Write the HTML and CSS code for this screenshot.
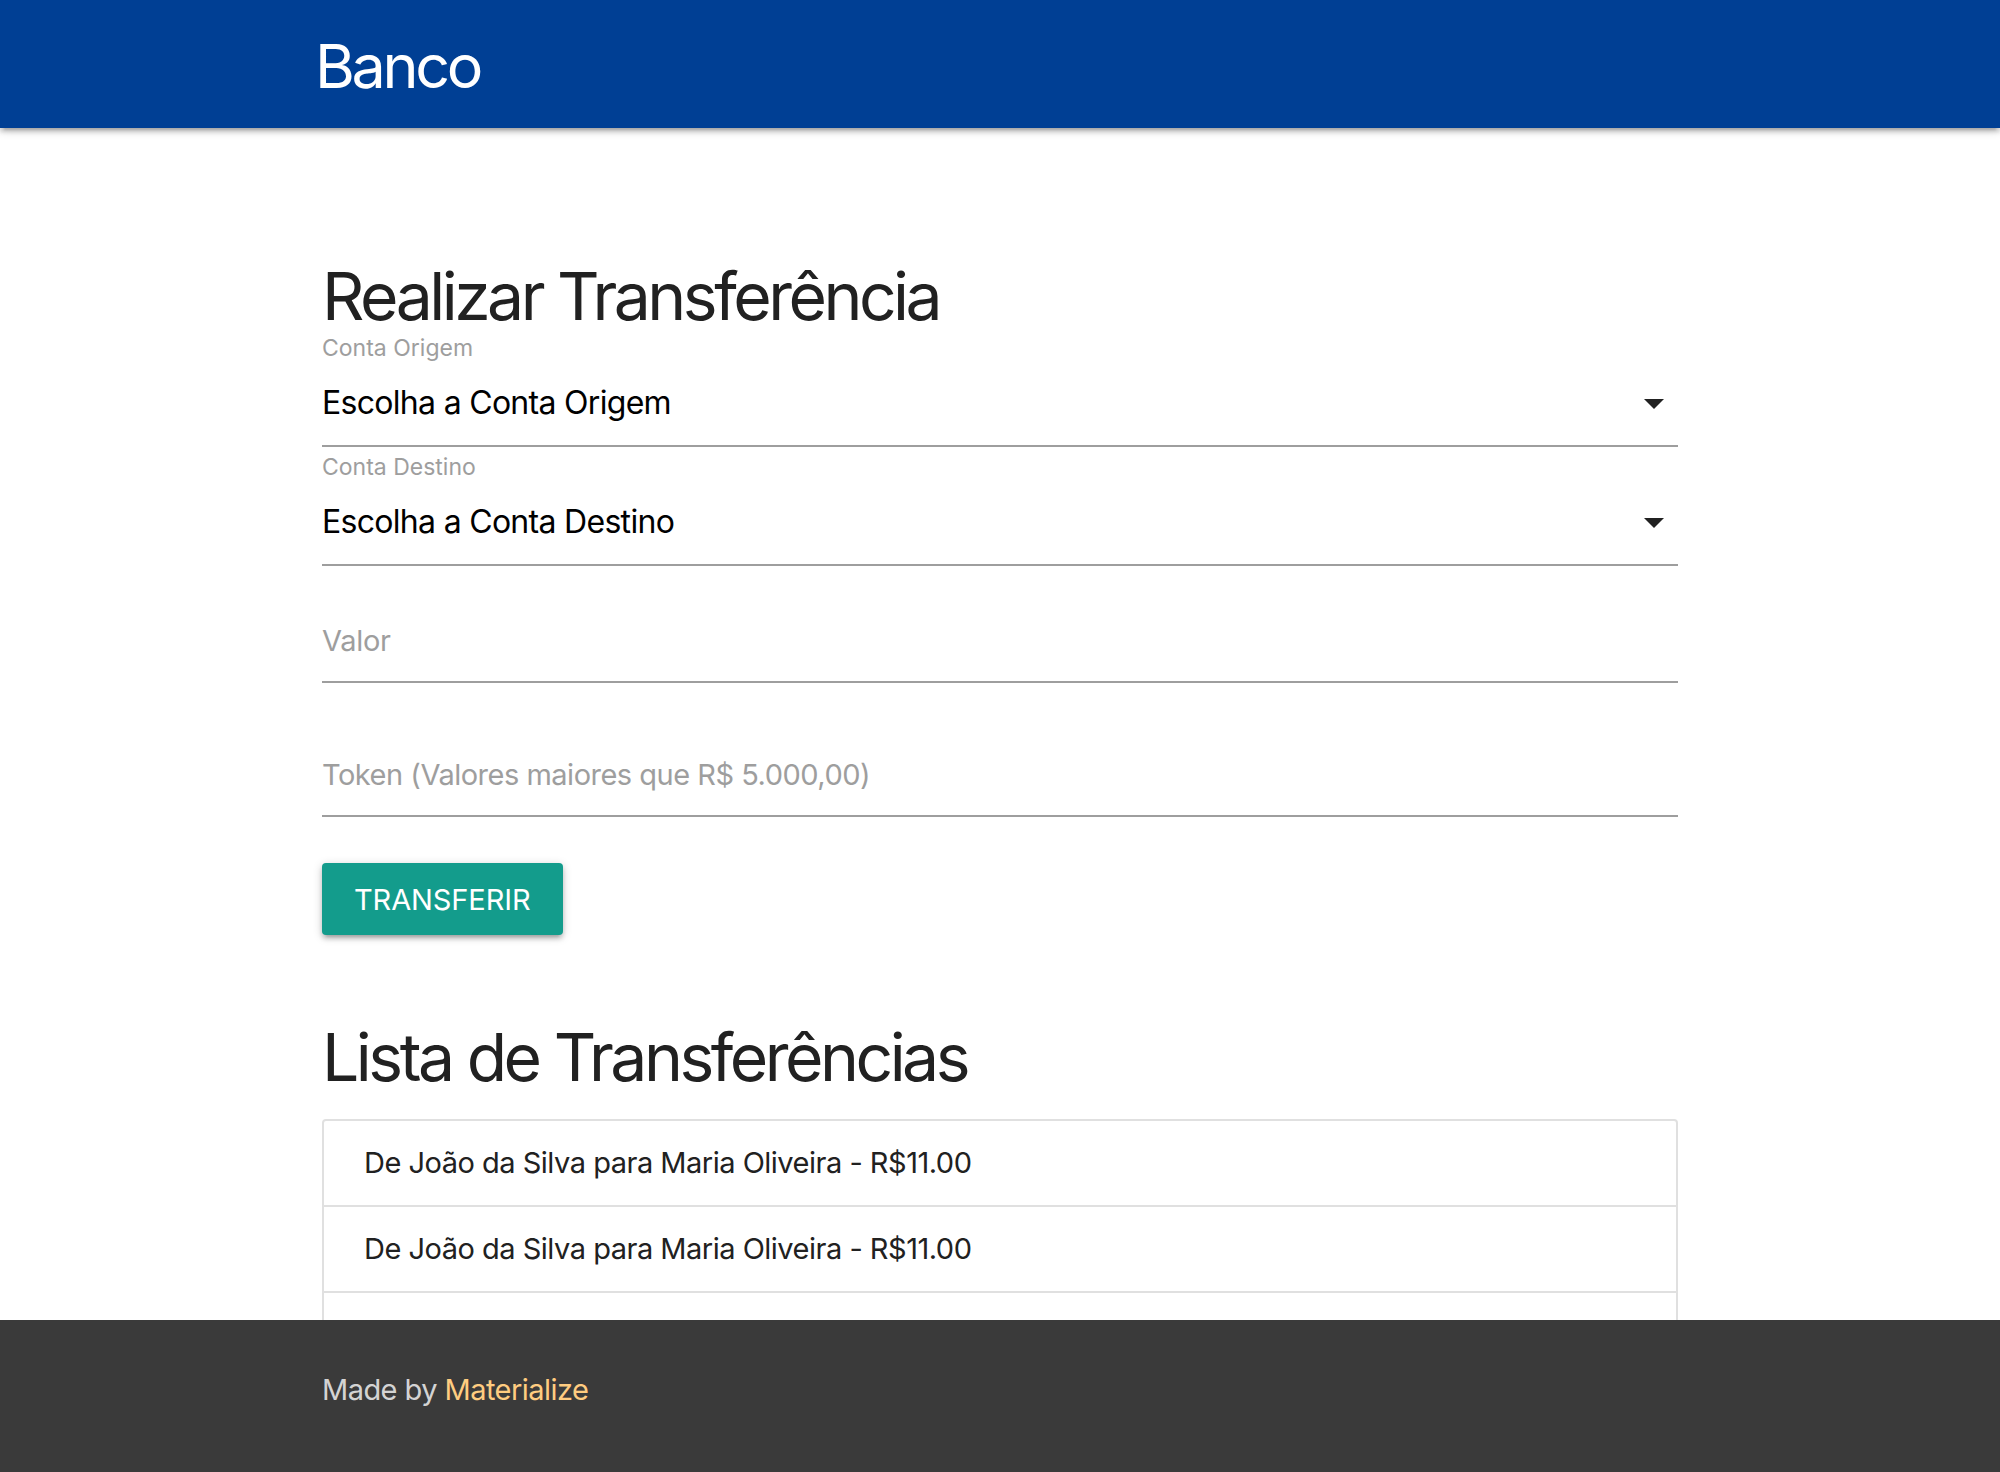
FILE: index.html
```html
<!DOCTYPE html>
<html lang="pt-BR">
<head>
<meta charset="utf-8">
<title>Banco</title>
<link rel="stylesheet" href="styles.css">
</head>
<body>
<nav class="topbar">
  <div class="topbar-inner">
    <span class="brand">Banco</span>
  </div>
</nav>

<main class="page">
  <h4 class="title title-first">Realizar Transferência</h4>
  <form class="form">
    <div class="field select-field first">
      <label class="field-label">Conta Origem</label>
      <div class="select-box">
        <span class="select-text">Escolha a Conta Origem</span>
        <svg class="caret" viewBox="0 0 24 24" width="48" height="48"><path d="M7 10l5 5 5-5z"/></svg>
      </div>
    </div>
    <div class="field select-field second">
      <label class="field-label">Conta Destino</label>
      <div class="select-box">
        <span class="select-text">Escolha a Conta Destino</span>
        <svg class="caret" viewBox="0 0 24 24" width="48" height="48"><path d="M7 10l5 5 5-5z"/></svg>
      </div>
    </div>
    <div class="field text-field valor">
      <span class="placeholder">Valor</span>
    </div>
    <div class="field text-field token">
      <span class="placeholder">Token (Valores maiores que R$ 5.000,00)</span>
    </div>
    <button type="button" class="btn">Transferir</button>
  </form>

  <h4 class="title title-second">Lista de Transferências</h4>
  <ul class="collection">
    <li class="collection-item">De João da Silva para Maria Oliveira - R$11.00</li>
    <li class="collection-item">De João da Silva para Maria Oliveira - R$11.00</li>
    <li class="collection-item">De João da Silva para Maria Oliveira - R$11.00</li>
    <li class="collection-item">De João da Silva para Maria Oliveira - R$11.00</li>
  </ul>
</main>

<footer class="footer">
  <div class="footer-inner">Made by <a class="footer-link" href="#">Materialize</a></div>
</footer>
</body>
</html>
```

FILE: styles.css
```css
* { box-sizing: border-box; }

html, body {
  margin: 0;
  padding: 0;
}

body {
  font-family: Inter, "Noto Sans", "Liberation Sans", sans-serif;
  color: #212121;
  background: #ffffff;
}

.topbar {
  height: 128px;
  background: #003f94;
  box-shadow: 0 4px 4px 0 rgba(0,0,0,0.14), 0 6px 2px -4px rgba(0,0,0,0.12), 0 2px 10px 0 rgba(0,0,0,0.2);
  position: relative;
  z-index: 2;
}

.topbar-inner {
  width: 1400px;
  margin: 0 auto;
  padding-left: 15px;
}

.brand {
  display: block;
  color: #ffffff;
  font-size: 61px;
  line-height: 124px;
  padding-top: 4px;
  letter-spacing: -3.3px;
}

.page {
  width: 1356px;
  margin: 0 auto;
  padding-bottom: 200px;
}

.title {
  margin: 0;
  font-size: 66px;
  line-height: 72px;
  font-weight: 400;
  color: #212121;
  letter-spacing: -3.5px;
}

.title-first { margin-top: 132px; }
.title-second { margin-top: 86px; }

.form { display: block; }

.field { display: block; }

.select-field.first { margin-top: 4px; }
.select-field.second { margin-top: 8px; }

.field-label {
  display: block;
  height: 24px;
  font-size: 23px;
  line-height: 24px;
  color: #9e9e9e;
}

.select-box {
  height: 87px;
  border-bottom: 2px solid #9e9e9e;
  display: flex;
  align-items: center;
  justify-content: space-between;
}

.select-text {
  font-size: 32px;
  color: #000000;
  letter-spacing: -0.7px;
}

.caret {
  fill: #212121;
  flex: none;
}

.text-field {
  height: 87px;
  padding-top: 4px;
  border-bottom: 2px solid #9e9e9e;
  display: flex;
  align-items: center;
}

.text-field.valor { margin-top: 30px; }
.text-field.token { margin-top: 47px; }

.placeholder {
  font-size: 29px;
  color: #9e9e9e;
  letter-spacing: -0.5px;
}

.valor .placeholder { letter-spacing: -0.3px; }

.btn {
  display: block;
  margin-top: 46px;
  height: 72px;
  padding: 0 32px;
  border: none;
  border-radius: 4px;
  background: #139c8c;
  color: #ffffff;
  font-family: inherit;
  font-size: 29px;
  letter-spacing: -0.1px;
  text-transform: uppercase;
  box-shadow: 0 4px 4px 0 rgba(0,0,0,0.14), 0 6px 2px -4px rgba(0,0,0,0.12), 0 2px 10px 0 rgba(0,0,0,0.2);
}

.collection {
  list-style: none;
  margin: 26px 0 0 0;
  padding: 0;
  border: 2px solid #e0e0e0;
  border-radius: 4px;
}

.collection-item {
  padding: 20px 40px;
  font-size: 29px;
  line-height: 44px;
  color: #212121;
  border-bottom: 2px solid #e0e0e0;
  letter-spacing: -0.5px;
}

.collection-item:last-child { border-bottom: none; }

.footer {
  position: fixed;
  left: 0;
  right: 0;
  bottom: 0;
  height: 152px;
  background: #3a3a3a;
  z-index: 3;
}

.footer-inner {
  width: 1356px;
  margin: 0 auto;
  padding-top: 48px;
  font-size: 29px;
  line-height: 44px;
  color: rgba(255,255,255,0.8);
  letter-spacing: -0.55px;
}

.footer-link {
  color: #ffcc80;
  text-decoration: none;
}
```
